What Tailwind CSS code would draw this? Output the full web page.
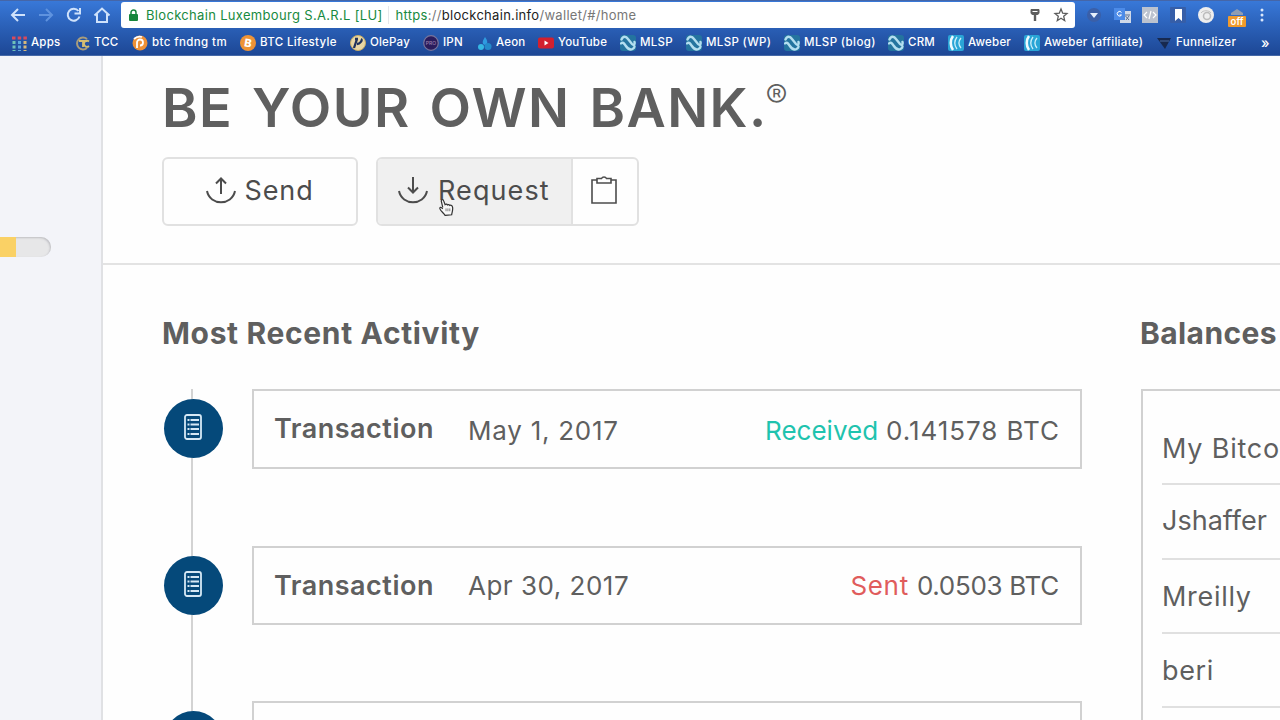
<!DOCTYPE html>
<html lang="en">
<head>
  <meta charset="UTF-8">
  <meta name="viewport" content="width=device-width, initial-scale=1.0">
  <title>Blockchain Wallet</title>
  <script src="https://cdn.jsdelivr.net/npm/@tailwindcss/browser@4"></script>
</head>
<body class="w-[1280px] h-[720px] overflow-hidden bg-[#fefefe] font-['Inter',sans-serif] text-[#5f5f5f] flex flex-col">
  <svg class="hidden">
    <symbol id="mlsp" viewBox="0 0 16 16">
      <rect width="16" height="16" rx="3" fill="#24749f" />
      <path d="M1.500 4.500C3 1 6 1 8 4l4 5c2 2 3 0 2.500-2M1 8.500c2-2 3 0 4.500 2 2 3 4 5 7 3.500 1.500-.8 2-2 2-2.500" fill="none" stroke="#b3def0" stroke-width="2.400" stroke-linecap="round" />
    </symbol>
    <symbol id="aweber" viewBox="0 0 16 16">
      <rect width="16" height="16" rx="2" fill="#2aa5d6" />
      <path d="M5 1C2 5 2 11 5 15" fill="none" stroke="#eefaff" stroke-width="2.600" />
      <path d="M9 2C6 6 6 10 9 14M13 3c-2.500 3-2.500 7 0 10" fill="none" stroke="#c9eefa" stroke-width="1.300" />
    </symbol>
    <symbol id="ledger" viewBox="0 0 18 26">
      <rect x="1" y="1" width="16" height="24" rx="2" fill="none" stroke="#d5e8f5" stroke-width="1.800" />
      <path d="M3.500 6h2M6.500 6h8.500M3.500 10.500h2M6.500 10.500h8.500M3.500 15h2M6.500 15h8.500M3.500 20h2M6.500 20h8.500" stroke="#d5e8f5" stroke-width="1.900" />
    </symbol>
  </svg>

  <!-- Browser chrome -->
  <header class="h-14 shrink-0 bg-linear-to-b from-[#3878d8] to-[#1d4795] border-t border-[#4566a8] border-b border-b-[#4669a8]">
    <div class="h-7 flex items-center">
      <svg class="w-[121px] h-7 shrink-0" viewBox="0 0 121 28" fill="none" stroke="#cfe2fb" stroke-width="2">
        <path d="M25 14H12M18 8l-6 6 6 6" />
        <path d="M39 14h13M46 8l6 6-6 6" stroke="#5f93df" />
        <path d="M78.500 10a6 6 0 1 0 1 5.500M80 7v5.500H74.500" />
        <path d="M94.500 14.500l7.500-7 7.500 7M97 13v8h10v-8" />
      </svg>
      <div class="w-[954px] h-[26px] shrink-0 bg-white rounded-[3px] flex items-center text-[13px] leading-none whitespace-nowrap">
        <svg class="w-[9px] h-3 ml-2 mr-2" viewBox="0 0 9 12"><rect y="5" width="9" height="7" rx="1" fill="#17863c" /><path d="M2 6V3.500a2.500 2.500 0 0 1 5 0V6" fill="none" stroke="#17863c" stroke-width="1.500" /></svg>
        <span class="text-[#188a40] tracking-[0.32px]">Blockchain Luxembourg S.A.R.L [LU]</span>
        <span class="w-px h-[18px] bg-gray-200 mx-1.5"></span>
        <span class="text-[#777] tracking-[0.3px]"><span class="text-[#188a40]">https</span>://<span class="text-[#222]">blockchain.info</span>/wallet/#/home</span>
        <svg class="w-10 h-4 ml-auto mr-1.5" viewBox="0 0 40 16" fill="none" stroke="#5c5c5c"><path d="M2 2.500h8v3.500a2 2 0 0 1-2 1.500H4A2 2 0 0 1 2 6z" fill="#5c5c5c" /><path d="M3.500 4.500h5" stroke="#fff" /><path d="M6 7.500v6.500" stroke-width="2.400" /><path d="M32 2l1.700 4.200 4.300.3-3.300 2.800 1 4.400L32 11.300l-3.700 2.400 1-4.400L26 6.500l4.300-.3z" stroke-width="1.300" /></svg>
      </div>
      <svg class="w-[205px] h-7 shrink-0" viewBox="0 0 205 28">
        <circle cx="19" cy="14" r="7" fill="#3a5fa8" /><path d="M15 12h8l-4 5z" fill="#e6effc" />
        <rect x="45" y="10" width="11" height="12" fill="#cfd9e8" /><rect x="39" y="7" width="11" height="12" fill="#4c8be8" /><path d="M46.500 11.500a2.300 2.300 0 1 0 0 2.500h-2" stroke="#fff" fill="none" /><path d="M50 14h5M50.500 15l3.500 4M54 15l-3 4" stroke="#5b6f91" fill="none" />
        <rect x="67" y="6" width="16" height="16" fill="#bcc3cf" /><path d="M72 11l-3 3 3 3M78 11l3 3-3 3M76 10l-2 8" stroke="#fff" stroke-width="1.200" fill="none" />
        <rect x="95" y="6" width="16" height="16" rx="1" fill="#365ea8" /><path d="M100 8h7v12l-3.500-3-3.500 3z" fill="#fff" />
        <circle cx="131" cy="14" r="8" fill="#eee" /><circle cx="132" cy="15" r="3.500" fill="none" stroke="#bbb" stroke-width="1.500" /><path d="M126 12c2-3 8-3 10 0" stroke="#c2c2c2" fill="none" />
        <path d="M156 14v-2l6-4 6 4v2z" fill="#8f9db4" /><rect x="153" y="15" width="18" height="11" rx="1" fill="#f09a2c" />
        <text x="162" y="24" text-anchor="middle" font-size="9.500" font-weight="600" fill="#fff">off</text>
        <g fill="#dbe8fb"><circle cx="187" cy="9" r="1.500" /><circle cx="187" cy="14" r="1.500" /><circle cx="187" cy="19" r="1.500" /></g>
      </svg>
    </div>
    <nav class="h-[27px] pl-3 pt-px flex items-center text-[11.5px] leading-none font-medium text-white whitespace-nowrap">
      <div class="w-[63px] flex items-center gap-1"><svg class="size-[15px]" viewBox="0 0 15 15"><path d="M0 2h15" stroke="#d84a5c" stroke-width="3" stroke-dasharray="3.500 2.200" /><path d="M2 5v10" stroke="#6fc1b8" stroke-width="3" stroke-dasharray="3 1.500" /><path d="M7.500 5v10" stroke="#5ca7dd" stroke-width="3" stroke-dasharray="3 1.500" /><path d="M13 5v10" stroke="#d5b77a" stroke-width="3" stroke-dasharray="3 1.500" /></svg><span class="tracking-[0.2px]">Apps</span></div>
      <div class="w-[57px] flex items-center gap-1"><svg class="size-[15px]" viewBox="0 0 15 15" fill="none"><path d="M12 3a6 6 0 1 0 0 9" stroke="#a89c7c" stroke-width="2" /><path d="M4 5h8M8 5v6M14 5.500a3 3 0 1 0 0 4.500" stroke="#d4bd72" stroke-width="1.800" /></svg><span class="tracking-[0.1px]">TCC</span></div>
      <div class="w-[108px] flex items-center gap-1"><svg class="size-4" viewBox="0 0 16 16"><circle cx="8" cy="8" r="7.500" fill="#ef9137" /><path d="M5 13V7.500a3 3 0 1 1 3 3M2 4c2-2 5-3 8-2" stroke="#fff" stroke-width="1.800" fill="none" /></svg><span class="tracking-[0.4px]">btc fndng tm</span></div>
      <div class="w-[110px] flex items-center gap-1"><svg class="size-4" viewBox="0 0 16 16"><circle cx="8" cy="8" r="8" fill="#ee9336" /><text x="8" y="12" text-anchor="middle" font-size="11" font-weight="800" fill="#fff" transform="rotate(10 8 8)">B</text></svg><span class="tracking-[0.35px]">BTC Lifestyle</span></div>
      <div class="w-[73px] flex items-center gap-1"><svg class="size-4" viewBox="0 0 16 16"><circle cx="8" cy="8" r="7.500" fill="#e9d7a4" stroke="#c9ac62" /><path d="M7 4L4 13M5 4h3M11 4c2 1-1 5-4 5" stroke="#21335c" stroke-width="2.300" fill="none" /></svg><span class="tracking-[0.2px]">OlePay</span></div>
      <div class="w-[54px] flex items-center gap-1"><svg class="size-4" viewBox="0 0 16 16"><circle cx="8" cy="8" r="7.300" fill="#2a1c5c" stroke="#77749c" stroke-width="1.200" /><text x="8" y="10" text-anchor="middle" font-size="5" fill="#9a7fae">PRO</text></svg><span class="tracking-[0.2px]">IPN</span></div>
      <div class="w-[61px] flex items-center gap-1"><svg class="size-[15px]" viewBox="0 0 15 15"><path d="M8 1c3 4 3 7 0 8-4-1-2-5 0-8z" fill="#2f9be0" /><circle cx="4" cy="11" r="3" fill="#35b6e3" /><circle cx="11" cy="10.500" r="3.500" fill="#238acb" /></svg><span class="tracking-[0.2px]">Aeon</span></div>
      <div class="w-[82px] flex items-center gap-1"><svg class="size-4" viewBox="0 0 16 16"><rect y="2.500" width="16" height="11" rx="2" fill="#d3202e" /><path d="M6.500 5.500v5l4-2.500z" fill="#fff" /></svg><span class="tracking-[0.2px]">YouTube</span></div>
      <div class="w-[66px] flex items-center gap-1"><svg class="size-4"><use href="#mlsp" /></svg><span class="tracking-[0.3px]">MLSP</span></div>
      <div class="w-[98px] flex items-center gap-1"><svg class="size-4"><use href="#mlsp" /></svg><span class="tracking-[0.35px]">MLSP (WP)</span></div>
      <div class="w-[104px] flex items-center gap-1"><svg class="size-4"><use href="#mlsp" /></svg><span class="tracking-[0.4px]">MLSP (blog)</span></div>
      <div class="w-[60px] flex items-center gap-1"><svg class="size-4"><use href="#mlsp" /></svg><span class="tracking-[0.2px]">CRM</span></div>
      <div class="w-[76px] flex items-center gap-1"><svg class="size-4"><use href="#aweber" /></svg><span class="tracking-[0.2px]">Aweber</span></div>
      <div class="w-[132px] flex items-center gap-1"><svg class="size-4"><use href="#aweber" /></svg><span class="tracking-[0.3px]">Aweber (affiliate)</span></div>
      <div class="w-[105px] flex items-center gap-1"><svg class="size-4" viewBox="0 0 16 16"><path d="M1 3h14l-6 11z" fill="#17294f" /><path d="M4 6h9" stroke="#3a5687" stroke-width="1.500" /></svg><span class="tracking-[0.3px]">Funnelizer</span></div>
      <span class="text-[14px] pb-px">»</span>
    </nav>
  </header>

  <div class="flex flex-1 min-h-0">
    <aside class="w-[103px] shrink-0 bg-[#f3f4f9] border-r-2 border-[#e0e1e4] pt-[181px]">
      <div class="w-[51px] h-5 bg-[#e7e7e8] rounded-r-full shadow-[inset_-1px_1px_2px_#bfbfc3]"><div class="w-4 h-5 bg-[#fad165]"></div></div>
    </aside>

    <main class="flex-1 min-w-0 overflow-hidden">
      <section class="h-[209px] border-b-2 border-[#e3e3e3] pl-[59px]">
        <div class="flex pt-5 h-[101px]">
          <h1 class="text-[54px] leading-[64px] font-semibold tracking-[1.4px] [word-spacing:4px] whitespace-nowrap">BE YOUR OWN BANK.</h1>
          <span class="text-[33px] leading-10 font-light -ml-0.5">®</span>
        </div>
        <div class="flex text-[27px] leading-none text-[#4c4c4c]">
          <button class="w-[196px] h-[69px] border-2 border-[#e1e1e1] rounded-md flex items-center justify-center gap-2 pb-0.5">
            <svg class="w-[30px] h-7" viewBox="0 0 30 28" fill="none" stroke="currentColor" stroke-width="2"><path d="M15 17V2M10 6.500l5-5 5 5M1 14c3 15 25 15 28 0" /></svg>
            <span class="tracking-[0.9px]">Send</span>
          </button>
          <div class="ml-[18px] w-[263px] h-[69px] border-2 border-[#e1e1e1] rounded-md flex overflow-hidden">
            <button class="w-[195px] bg-[#f0f0f0] border-r-2 border-[#e1e1e1] flex items-center pl-5 gap-2.5 pb-0.5">
              <svg class="w-[30px] h-7" viewBox="0 0 30 28" fill="none" stroke="currentColor" stroke-width="2"><path d="M15 0v15M10 10.500l5 5 5-5M1 14c3 15 25 15 28 0" /></svg>
              <span class="tracking-[1.1px]">Request</span>
            </button>
            <button class="flex-1 flex items-center justify-center pb-[3px] pr-0.5">
              <svg class="w-[26px] h-7" viewBox="0 0 26 28" fill="none" stroke="currentColor" stroke-width="1.600"><path d="M6 4H1v23h24V4h-5M6 2.500h4.500c1-2 4-2 5 0H20V7H6z" /></svg>
            </button>
          </div>
        </div>
      </section>

      <div class="flex pl-[59px] pt-[50px]">
        <section class="w-[979px] shrink-0">
          <h2 class="text-[30px] leading-9 font-bold h-[74px] tracking-[0.65px]">Most Recent Activity</h2>
          <div class="relative">
            <div class="absolute left-[29px] top-0 w-0.5 h-full bg-[#d3d3d3]"></div>
            <div class="relative flex h-[157px]">
              <div class="ml-[1.5px] mt-2.5 size-[59px] rounded-full bg-[#05497a] flex items-center justify-center pb-[3px]"><svg class="w-[18px] h-[26px]"><use href="#ledger" /></svg></div>
              <div class="ml-[29.5px] w-[830px] h-20 border-2 border-[#d1d1d1] flex items-center px-[21px] text-[26px] leading-none">
                <span class="text-[27px] font-semibold tracking-[0.5px] w-[194px] pb-0.5 -ml-px">Transaction</span>
                <span class="tracking-[0.75px] pt-1">May 1, 2017</span>
                <span class="ml-auto pt-1 text-[#1fc3ae]">Received</span>
                <span class="ml-2 pt-1 tracking-[0.95px] -mr-px">0.141578 BTC</span>
              </div>
            </div>
            <div class="relative flex h-[155px]">
              <div class="ml-[1.5px] mt-2.5 size-[59px] rounded-full bg-[#05497a] flex items-center justify-center pb-[3px]"><svg class="w-[18px] h-[26px]"><use href="#ledger" /></svg></div>
              <div class="ml-[29.5px] w-[830px] h-[79px] border-2 border-[#d1d1d1] flex items-center px-[21px] text-[26px] leading-none">
                <span class="text-[27px] font-semibold tracking-[0.5px] w-[194px] -ml-px">Transaction</span>
                <span class="tracking-[0.5px]">Apr 30, 2017</span>
                <span class="ml-auto text-[#e05c5c] tracking-[0.7px]">Sent</span>
                <span class="ml-2 tracking-[-0.3px]">0.0503 BTC</span>
              </div>
            </div>
            <div class="relative flex h-20">
              <div class="ml-[1.5px] mt-2.5 size-[59px] rounded-full bg-[#05497a]"></div>
              <div class="ml-[29.5px] w-[830px] h-20 border-2 border-[#d1d1d1]"></div>
            </div>
          </div>
        </section>

        <section class="flex-1 min-w-0">
          <h2 class="text-[30px] leading-9 font-bold h-[74px] tracking-[0.4px] -ml-px">Balances</h2>
          <div class="h-[340px] border-2 border-r-0 border-[#d1d1d1] pl-[19px] pt-5 text-[27px] leading-none whitespace-nowrap">
            <div class="h-[74px] border-b-2 border-[#e0e0e0] flex items-center pt-0.5 tracking-[0.8px]">My Bitco</div>
            <div class="h-[75px] border-b-2 border-[#e0e0e0] flex items-center pb-[3px]">Jshaffer</div>
            <div class="h-[74px] border-b-2 border-[#e0e0e0] flex items-center tracking-[0.7px]">Mreilly</div>
            <div class="h-[74px] border-b-2 border-[#e0e0e0] flex items-center tracking-[0.6px]">beri</div>
          </div>
        </section>
      </div>
    </main>
  </div>

  <!-- Pointer -->
  <svg class="absolute left-[439px] top-[198px] w-[15px] h-[18px]" viewBox="0 0 16 19"><path d="M4 10L2.500 3.500C2 1.500 4.500 1 5 3l1.500 4c1-1 2-.5 2.500.3 1-.8 2-.3 2.500.5 1.500-.6 2.500 0 3 2 .5 3-.5 5-1 8l-7 .7C5 16 2 14 1 11.500c-.5-1.500 1-2.500 3 0" fill="#f8f8f8" stroke="#333" stroke-width="1.300" /><path d="M7.500 11v3M9.500 11v3M11.500 11v3" stroke="#777" /></svg>
</body>
</html>
